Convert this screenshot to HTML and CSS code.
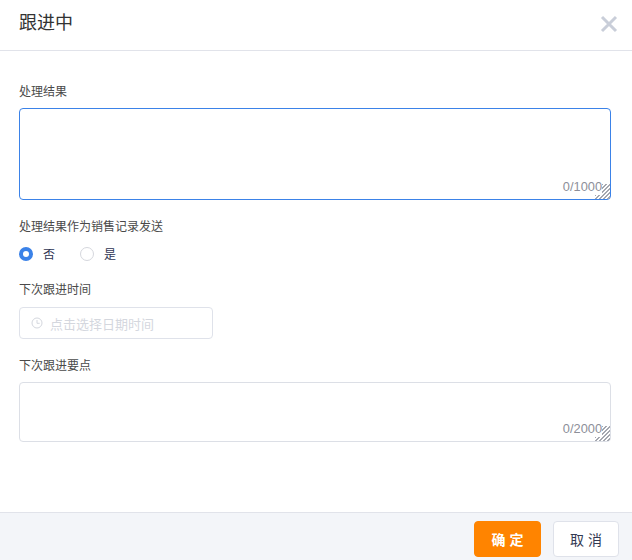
FILE: index.html
```html
<!DOCTYPE html>
<html lang="zh">
<head>
<meta charset="utf-8">
<title>跟进中</title>
<link rel="stylesheet" href="styles.css">
</head>
<body>
<div class="dialog">
  <header class="head">
    <h1 class="title">跟进中</h1>
    <svg class="close" width="18" height="18" viewBox="0 0 18 18"><path d="M2 2L16 16M16 2L2 16" stroke="#c9ced9" stroke-width="3" fill="none"/></svg>
  </header>
  <main class="body">
    <div class="field first">
      <label class="label">处理结果</label>
      <div class="area-wrap">
        <textarea class="area tall focus"></textarea>
        <span class="count">0/1000</span>
      </div>
    </div>
    <div class="field f2">
      <label class="label">处理结果作为销售记录发送</label>
      <div class="radios">
        <span class="radio"><i class="dot on"></i>否</span>
        <span class="radio"><i class="dot"></i>是</span>
      </div>
    </div>
    <div class="field f3">
      <label class="label">下次跟进时间</label>
      <div class="date">
        <svg width="12" height="12" viewBox="0 0 12 12"><circle cx="6" cy="6" r="5" fill="none" stroke="#d4d7de"/><path d="M6 3V6.300H8.700" fill="none" stroke="#d4d7de"/></svg>
        <span>点击选择日期时间</span>
      </div>
    </div>
    <div class="field f4">
      <label class="label">下次跟进要点</label>
      <div class="area-wrap">
        <textarea class="area short"></textarea>
        <span class="count">0/2000</span>
      </div>
    </div>
  </main>
  <footer class="foot">
    <button class="btn primary">确 定</button>
    <button class="btn">取 消</button>
  </footer>
</div>
</body>
</html>
```
FILE: styles.css
```css
* { box-sizing: border-box; }
html, body { margin: 0; height: 100%; }
body { font-family: "Liberation Sans", "Noto Sans CJK SC", sans-serif; background: #fff; overflow: hidden; }
.dialog { width: 632px; height: 560px; display: flex; flex-direction: column; }
.head { height: 51px; flex: none; border-bottom: 1px solid #e1e3ea; padding: 0 14px 0 19px; display: flex; align-items: center; justify-content: space-between; }
.title { margin: 0 0 4px; font-size: 18px; font-weight: 400; color: #333; line-height: 32px; }
.close { margin-top: -2px; }
.body { flex: 1; padding: 0 21px 0 19px; }
.field { display: flex; flex-direction: column; }
.first { margin-top: 33px; }
.f2 { margin-top: 19px; }
.f3 { margin-top: 19px; }
.f4 { margin-top: 19px; }
.label { font-size: 12px; line-height: 17px; color: #4a4a4a; height: 17px; margin-bottom: 7px; }
.area-wrap { position: relative; display: flex; }
.area { width: 100%; display: block; border: 1px solid #dcdfe6; border-radius: 4px; outline: none; resize: vertical; padding: 5px 10px; font: inherit; background: #fff; margin: 0; }
.area::-webkit-resizer { background: repeating-linear-gradient(135deg, transparent 0 1.600px, #a4a7af 1.600px 2.900px); clip-path: polygon(100% 5%, 100% 100%, 5% 100%); }
.focus { border-color: #3b82e8; }
.tall { height: 92px; }
.short { height: 60px; }
.count { position: absolute; right: 9px; bottom: 5px; font-size: 12.800px; line-height: 16px; color: #8d8f99; background: #fff; }
.radios { display: flex; gap: 25px; height: 19px; align-items: center; margin-top: 1px; }
.radio { display: flex; align-items: center; gap: 10px; font-size: 12px; color: #2f3553; }
.dot { width: 14px; height: 14px; border-radius: 50%; border: 1px solid #d5d7dd; background: #fff; }
.dot.on { border: 4px solid #3b82e8; }
.date { width: 194px; height: 32px; margin-top: 1px; border: 1px solid #dfe2ea; border-radius: 4px; display: flex; align-items: center; gap: 7px; padding-left: 11px; font-size: 13px; color: #d4d7de; }
.foot { height: 48px; flex: none; background: #f3f5f9; border-top: 1px solid #e1e3ea; padding: 8px 13px 0 0; display: flex; justify-content: flex-end; gap: 12px; align-items: flex-start; }
.btn { width: 66px; height: 36px; border: 1px solid #dfe2ea; border-radius: 4px; background: #fff; font: inherit; font-size: 14px; color: #333a52; padding: 0; }
.primary { width: 67px; background: #ff8400; border-color: #ff8400; color: #fff; font-weight: 700; }
```
